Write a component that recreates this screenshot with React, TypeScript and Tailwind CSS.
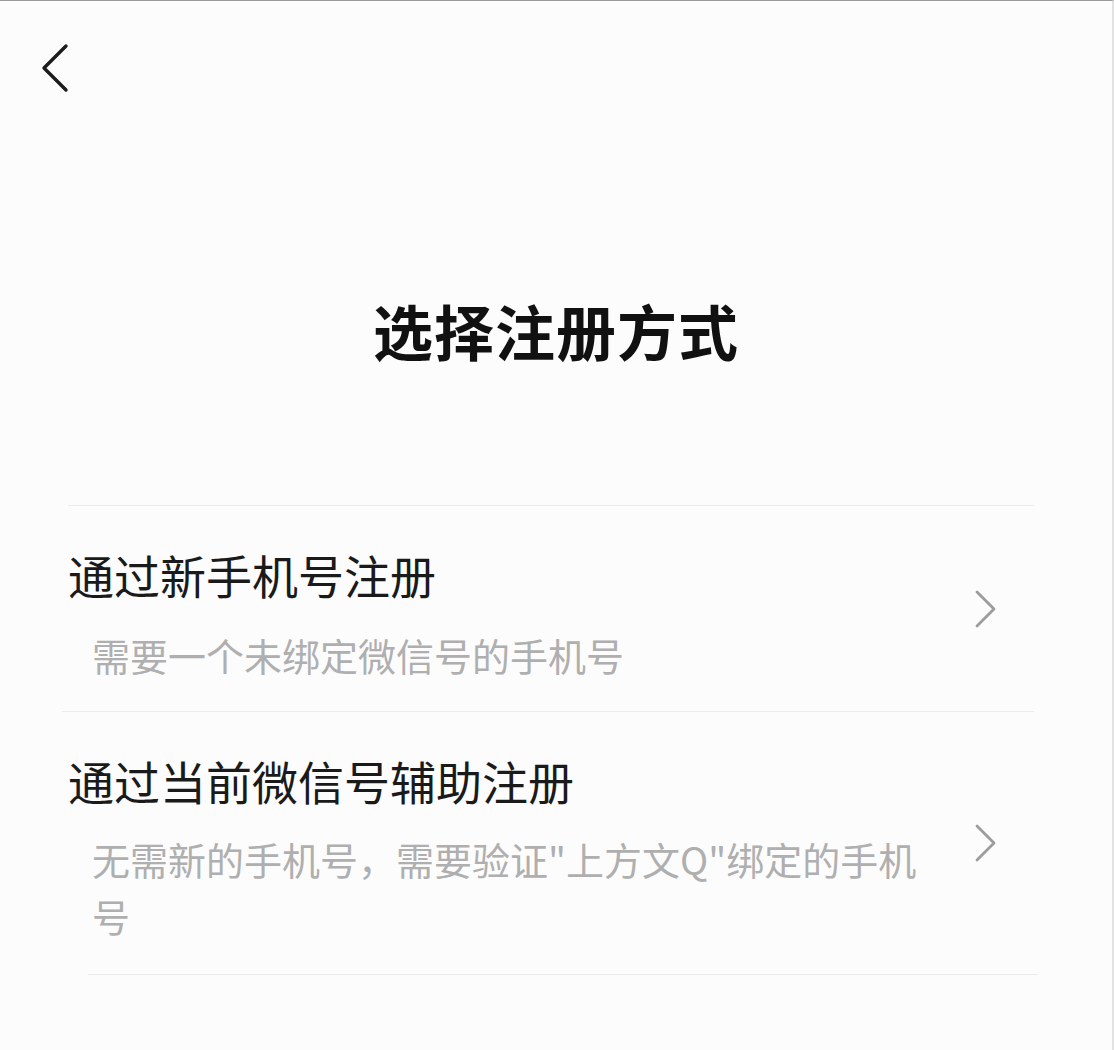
import React from "react";

const FONT = "font-['Noto_Sans_CJK_SC','Noto_Sans',sans-serif]";

function BackIcon() {
  return (
    <svg width="28" height="50" viewBox="0 0 28 50" fill="none" aria-hidden="true">
      <polyline
        points="25,3 3,25 25,47"
        stroke="#1c1c1c"
        strokeWidth="3.4"
        strokeLinecap="round"
        strokeLinejoin="round"
      />
    </svg>
  );
}

function ChevronRight() {
  return (
    <svg width="24" height="38" viewBox="0 0 24 38" fill="none" aria-hidden="true">
      <polyline
        points="3,2 20,19 3,36"
        stroke="#9c9c9c"
        strokeWidth="2.8"
        strokeLinecap="round"
        strokeLinejoin="round"
      />
    </svg>
  );
}

export default function App() {
  return (
    <div
      className={`${FONT} w-[1114px] h-[1050px] bg-[#fcfcfd] border-t border-t-[#9a9a9a] border-r-[2px] border-r-[#e2e2e2] overflow-hidden`}
    >
      {/* top bar */}
      <div className="pl-[41px] pt-[42px] h-[100px]">
        <BackIcon />
      </div>

      {/* page title */}
      <h1 className="mt-[199px] text-center text-[60px] leading-[60px] font-bold text-[#111] tracking-[1px]">
        选择注册方式
      </h1>

      {/* options */}
      <div className="mt-[145px] ml-[68px] mr-[78px]">
        <div className="border-t border-[#ececec]" />

        <div className="flex items-start">
          <div className="w-[880px] pt-[40px] pb-[28px]">
            <p className="text-[46px] leading-[56px] text-[#1a1a1a]">通过新手机号注册</p>
            <p className="mt-[25px] pl-[24px] text-[38px] leading-[56px] text-[#afafaf]">
              需要一个未绑定微信号的手机号
            </p>
          </div>
          <div className="pt-[84px] ml-[26px]">
            <ChevronRight />
          </div>
        </div>

        <div className="border-t border-[#ececec] -ml-[6px]" />

        <div className="flex items-start">
          <div className="w-[880px] pt-[40px] pb-[30px]">
            <p className="text-[46px] leading-[56px] text-[#1a1a1a]">通过当前微信号辅助注册</p>
            <p className="mt-[22px] pl-[24px] pr-[20px] text-[38px] leading-[57px] text-[#afafaf]">
              无需新的手机号，需要验证"上方文Q"绑定的手机号
            </p>
          </div>
          <div className="pt-[112px] ml-[26px]">
            <ChevronRight />
          </div>
        </div>

        <div className="border-t border-[#ececec] ml-[20px] -mr-[4px]" />
      </div>
    </div>
  );
}
